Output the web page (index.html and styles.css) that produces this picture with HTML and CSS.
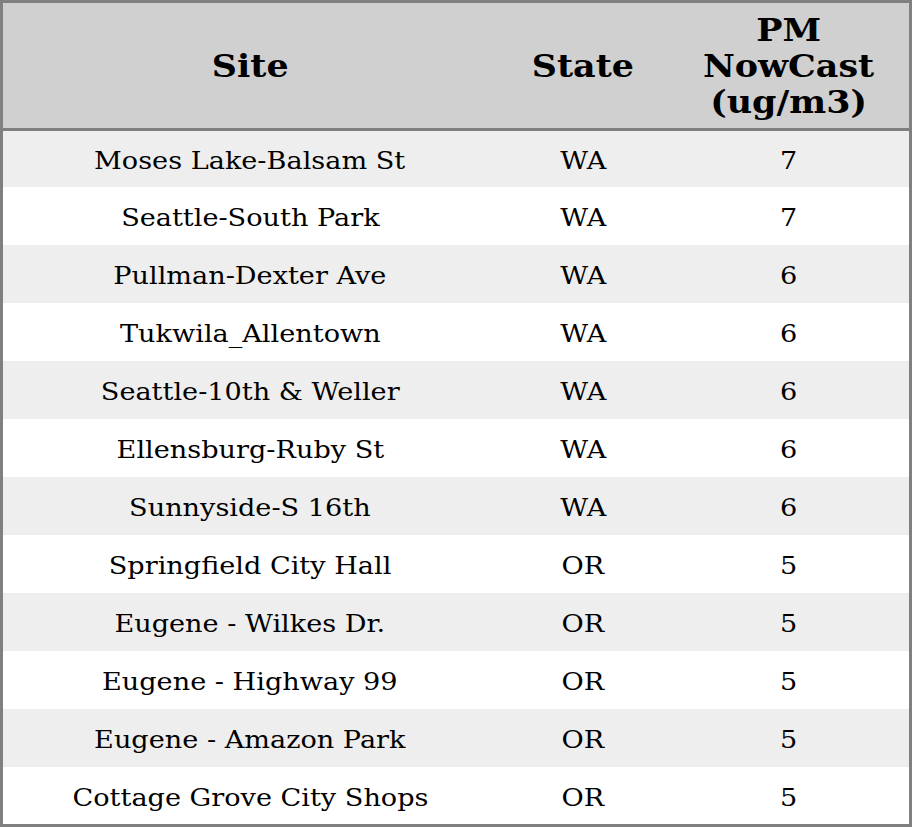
FILE: index.html
```html
<!DOCTYPE html>
<html>
<head>
<meta charset="utf-8">
<link rel="stylesheet" href="styles.css">
</head>
<body>
<table class="aq">
  <colgroup>
    <col class="c-site">
    <col class="c-state">
    <col class="c-pm">
  </colgroup>
  <thead>
    <tr><th><span class="t">Site</span></th><th><span class="t">State</span></th><th><span class="t">PM<br>NowCast<br>(ug/m3)</span></th></tr>
  </thead>
  <tbody>
    <tr><td><span class="t">Moses Lake-Balsam St</span></td><td><span class="t">WA</span></td><td><span class="t">7</span></td></tr>
    <tr><td><span class="t">Seattle-South Park</span></td><td><span class="t">WA</span></td><td><span class="t">7</span></td></tr>
    <tr><td><span class="t">Pullman-Dexter Ave</span></td><td><span class="t">WA</span></td><td><span class="t">6</span></td></tr>
    <tr><td><span class="t">Tukwila_Allentown</span></td><td><span class="t">WA</span></td><td><span class="t">6</span></td></tr>
    <tr><td><span class="t">Seattle-10th &amp; Weller</span></td><td><span class="t">WA</span></td><td><span class="t">6</span></td></tr>
    <tr><td><span class="t">Ellensburg-Ruby St</span></td><td><span class="t">WA</span></td><td><span class="t">6</span></td></tr>
    <tr><td><span class="t">Sunnyside-S 16th</span></td><td><span class="t">WA</span></td><td><span class="t">6</span></td></tr>
    <tr><td><span class="t">Springfield City Hall</span></td><td><span class="t">OR</span></td><td><span class="t">5</span></td></tr>
    <tr><td><span class="t">Eugene - Wilkes Dr.</span></td><td><span class="t">OR</span></td><td><span class="t">5</span></td></tr>
    <tr><td><span class="t">Eugene - Highway 99</span></td><td><span class="t">OR</span></td><td><span class="t">5</span></td></tr>
    <tr><td><span class="t">Eugene - Amazon Park</span></td><td><span class="t">OR</span></td><td><span class="t">5</span></td></tr>
    <tr><td><span class="t">Cottage Grove City Shops</span></td><td><span class="t">OR</span></td><td><span class="t">5</span></td></tr>
  </tbody>
</table>
</body>
</html>
```
FILE: styles.css
```css
html, body {
  margin: 0;
  padding: 0;
  background: #ffffff;
}
.aq {
  width: 912px;
  border: 3px solid #808080;
  border-spacing: 0;
  border-collapse: separate;
  table-layout: fixed;
  font-family: "DejaVu Serif", serif;
  color: #000000;
}
.c-site { width: 494px; }
.c-state { width: 172px; }
.c-pm { width: 240px; }
.t {
  display: inline-block;
}
.aq thead tr { height: 128px; }
.aq th {
  background: #d0d0d0;
  font-size: 32px;
  font-weight: bold;
  line-height: 36px;
  padding: 0;
  text-align: center;
  vertical-align: middle;
  border-bottom: 3px solid #808080;
}
.aq th .t { transform: scaleX(1.09); }
.aq tbody tr { height: 58px; }
.aq tbody tr:first-child { height: 56px; }
.aq tbody tr:last-child { height: 57px; }
.aq td {
  font-size: 24px;
  line-height: 28px;
  padding: 4px 0 0 0;
  text-align: center;
  vertical-align: middle;
}
.aq td .t { transform: scaleX(1.13); }
.aq tbody tr:nth-child(odd) td { background: #eeeeee; }
.aq tbody tr:nth-child(even) td { background: #ffffff; }
```
